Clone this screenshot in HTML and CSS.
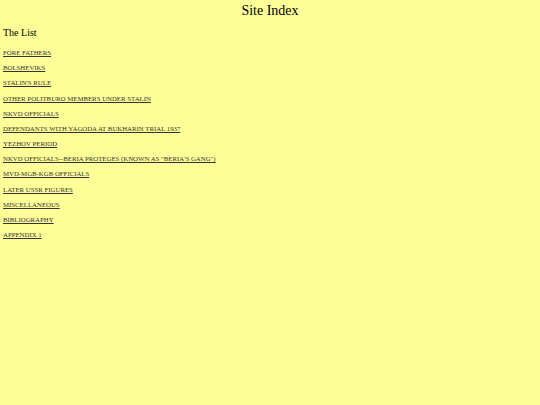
FILE: index.html
```
<!DOCTYPE html>
<html lang="en">
<head>
    <meta charset="UTF-8">
    <title>Site Index</title>
    <link rel="stylesheet" href="styles.css">
</head>
<body>
    <h1>Site Index</h1>
    <h2>The List</h2>
    <ul class="index">
        <li><a href="#">FORE FATHERS</a></li>
        <li><a href="#">BOLSHEVIKS</a></li>
        <li><a href="#">STALIN'S RULE</a></li>
        <li><a href="#">OTHER POLITBURO MEMBERS UNDER STALIN</a></li>
        <li><a href="#">NKVD OFFICIALS</a></li>
        <li><a href="#">DEFENDANTS WITH YAGODA AT BUKHARIN TRIAL 1937</a></li>
        <li><a href="#">YEZHOV PERIOD</a></li>
        <li><a href="#">NKVD OFFICIALS--BERIA PROTEGES (KNOWN AS "BERIA'S GANG")</a></li>
        <li><a href="#">MVD-MGB-KGB OFFICIALS</a></li>
        <li><a href="#">LATER USSR FIGURES</a></li>
        <li><a href="#">MISCELLANEOUS</a></li>
        <li><a href="#">BIBLIOGRAPHY</a></li>
        <li><a href="#">APPENDIX 1</a></li>
    </ul>
</body>
</html>
```

FILE: styles.css
```
body {
    font-family: "Liberation Serif", "Times New Roman", serif;
    color: #000;
    background-color: #ffff99;
    margin: 0;
    padding: 3px 3px;
}
h1 {
    font-size: 14px;
    line-height: 16px;
    font-weight: normal;
    text-align: center;
    margin: 0 0 8px;
}
h2 {
    font-size: 10px;
    line-height: 12px;
    font-weight: normal;
    margin: 0 0 6px;
}
.index {
    list-style: none;
    margin: 0;
    padding: 0;
}
.index li {
    font-size: 6.8px;
    line-height: 15.17px;
}
.index a {
    color: #333;
}
```
